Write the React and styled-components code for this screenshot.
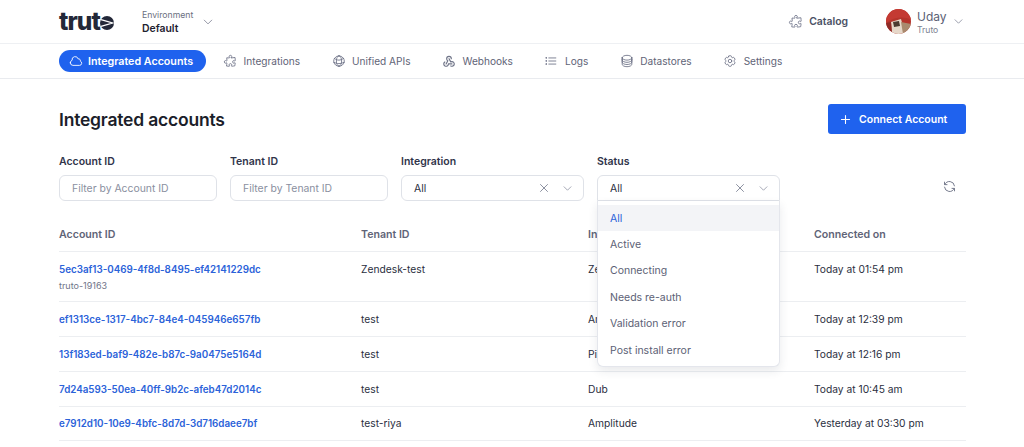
import React from 'react';
import styled, { createGlobalStyle } from 'styled-components';
import {
  HiOutlineCloud,
  HiOutlinePuzzlePiece,
  HiOutlineGlobeAlt,
  HiOutlineListBullet,
  HiOutlineCircleStack,
  HiOutlineCog6Tooth,
  HiOutlineChevronDown,
  HiOutlineXMark,
  HiOutlinePlus,
} from 'react-icons/hi2';
import { TbWebhook, TbRefresh } from 'react-icons/tb';

const GlobalStyle = createGlobalStyle`
  html, body {
    margin: 0;
    padding: 0;
    background: #fff;
    overflow: hidden;
  }
  body {
    font-family: Inter, "Liberation Sans", sans-serif;
    color: #1f2230;
  }
`;

const Page = styled.div`
  width: 1024px;
  height: 447px;
  overflow: hidden;
`;

const TopBar = styled.header`
  height: 43px;
  border-bottom: 1px solid #eef0f3;
  padding: 0 60px 0 59px;
  display: flex;
  align-items: center;
`;

const Logo = styled.div`
  display: flex;
  align-items: center;
  width: 83px;
  font-size: 24.5px;
  font-weight: 800;
  letter-spacing: -0.9px;
  color: #232838;
  line-height: 1;
  svg { margin-left: 0.5px; margin-top: 3px; }
`;

const EnvBlock = styled.div`
  display: flex;
  flex-direction: column;
  gap: 1px;
  width: 60px;
  margin-top: 1px;
`;

const EnvLabel = styled.span`
  font-size: 8.7px;
  color: #6b7080;
  line-height: 11px;
`;

const EnvValue = styled.span`
  font-size: 10.4px;
  font-weight: 600;
  color: #1f2230;
  line-height: 13px;
`;

const Caret = styled(HiOutlineChevronDown)`
  color: #71768a;
  width: ${p => p.$size || 12}px;
  height: ${p => p.$size || 12}px;
  flex: none;
`;

const Spacer = styled.div`
  flex: 1;
`;

const CatalogLink = styled.div`
  display: flex;
  align-items: center;
  gap: 6px;
  font-size: 10.4px;
  font-weight: 600;
  color: #4a5064;
  margin-right: 38px;
  svg { width: 15px; height: 15px; color: #70758a; stroke-width: 1.4; }
`;

const UserBlock = styled.div`
  display: flex;
  align-items: center;
  gap: 6px;
`;

const UserText = styled.div`
  display: flex;
  flex-direction: column;
  width: 30px;
  margin-top: 2px;
`;

const UserName = styled.span`
  font-size: 12px;
  color: #5c6175;
  line-height: 15px;
`;

const UserOrg = styled.span`
  font-size: 8.6px;
  color: #7a7f90;
  line-height: 13px;
`;

const NavBar = styled.nav`
  height: 34px;
  border-bottom: 1px solid #e9ebef;
  padding: 0 59px;
  display: flex;
  align-items: center;
  gap: 31.5px;
`;

const NavItem = styled.a`
  height: 22px;
  box-sizing: border-box;
  display: flex;
  align-items: center;
  gap: 6.5px;
  color: #5f6477;
  font-size: 10.1px;
  white-space: nowrap;
  svg { width: 14px; height: 14px; flex: none; color: #6f7488; }
`;

const ActiveNavItem = styled(NavItem)`
  gap: 5px;
  padding: 0 13px 0 10px;
  margin-right: -14.5px;
  border-radius: 11px;
  font-size: 10.7px;
  font-weight: 600;
  color: #fff;
  background: #1f62ee;
  svg { color: #fff; }
`;

const Content = styled.main`
  padding: 25px 58px 0 59px;
  position: relative;
`;

const TitleRow = styled.div`
  display: flex;
  justify-content: space-between;
  align-items: center;
  height: 30px;
`;

const Title = styled.h1`
  margin: 0;
  font-size: 17.5px;
  font-weight: 600;
  letter-spacing: -0.2px;
  color: #1b1e2a;
`;

const ConnectButton = styled.button`
  width: 138px;
  height: 30px;
  padding: 0 0 0 11px;
  border: 0;
  border-radius: 3px;
  background: #1f62ee;
  color: #fff;
  font-family: inherit;
  font-size: 10.5px;
  font-weight: 600;
  display: flex;
  align-items: center;
  gap: 7px;
  svg { width: 13px; height: 13px; stroke-width: 2; }
`;

const Filters = styled.div`
  display: flex;
  gap: 13px;
  margin-top: 21px;
  position: relative;
`;

const Field = styled.div`
  width: ${p => p.$w}px;
  position: relative;
`;

const FieldLabel = styled.div`
  font-size: 10.5px;
  font-weight: 600;
  color: #30344a;
  line-height: 14px;
  margin-bottom: 6px;
`;

const TextInput = styled.div`
  height: 26px;
  box-sizing: border-box;
  border: 1px solid #dfe2e8;
  border-radius: 6px;
  padding: 0 12px;
  display: flex;
  align-items: center;
  font-size: 10.4px;
  color: #8a8fa0;
`;

const Select = styled(TextInput)`
  color: #2a2e3e;
  justify-content: space-between;
  border-radius: ${p => (p.$open ? '6px 6px 0 0' : '6px')};
`;

const SelectIcons = styled.div`
  display: flex;
  align-items: center;
  gap: 11px;
  margin-right: -2px;
  svg { color: #7d8294; }
`;

const ClearIcon = styled(HiOutlineXMark)`
  width: 14px;
  height: 14px;
`;

const Menu = styled.ul`
  position: absolute;
  left: 0;
  right: 0;
  top: 46px;
  margin: 0;
  padding: 4px 0 3px;
  list-style: none;
  background: #fff;
  border: 1px solid #e4e6ec;
  border-top: 0;
  border-radius: 0 0 6px 6px;
  box-shadow: 0 4px 10px rgba(40, 45, 70, 0.1);
  z-index: 5;
`;

const MenuItem = styled.li`
  height: 26.4px;
  display: flex;
  align-items: center;
  padding: 0 12px;
  font-size: 10.5px;
  color: ${p => (p.$selected ? '#2b62d9' : '#5c6175')};
  background: ${p => (p.$selected ? '#f3f4f7' : 'transparent')};
`;

const RefreshButton = styled.div`
  margin-left: auto;
  padding: 23px 9px 0 0;
  svg { width: 15px; height: 15px; color: #6f7488; stroke-width: 1.5; }
`;

const Table = styled.div`
  margin-top: 24px;
`;

const Row = styled.div`
  display: grid;
  grid-template-columns: 302px 227px 226px 1fr;
  align-items: start;
  box-sizing: border-box;
  height: ${p => p.$h || 35}px;
  padding-top: ${p => p.$pt || 11}px;
  border-bottom: 1px solid #eceef1;
  font-size: 10.25px;
  line-height: 13px;
  color: #2a2e3e;
`;

const HeadCell = styled.div`
  font-size: 10.6px;
  font-weight: 600;
  color: #5f6477;
`;

const AccountLink = styled.a`
  display: block;
  font-size: 9.8px;
  font-weight: 600;
  color: #2b62d9;
`;

const SubText = styled.div`
  font-size: 9px;
  color: #6f7488;
  margin-top: 3px;
`;

const rows = [
  { id: '5ec3af13-0469-4f8d-8495-ef42141229dc', sub: 'truto-19163', tenant: 'Zendesk-test', integration: 'Zendesk', date: 'Today at 01:54 pm', h: 50 },
  { id: 'ef1313ce-1317-4bc7-84e4-045946e657fb', tenant: 'test', integration: 'Amplitude', date: 'Today at 12:39 pm' },
  { id: '13f183ed-baf9-482e-b87c-9a0475e5164d', tenant: 'test', integration: 'Pipedrive', date: 'Today at 12:16 pm' },
  { id: '7d24a593-50ea-40ff-9b2c-afeb47d2014c', tenant: 'test', integration: 'Dub', date: 'Today at 10:45 am' },
  { id: 'e7912d10-10e9-4bfc-8d7d-3d716daee7bf', tenant: 'test-riya', integration: 'Amplitude', date: 'Yesterday at 03:30 pm', h: 34, pt: 10 },
];

const statuses = ['All', 'Active', 'Connecting', 'Needs re-auth', 'Validation error', 'Post install error'];

const navItems = [
  { label: 'Integrations', Icon: HiOutlinePuzzlePiece },
  { label: 'Unified APIs', Icon: HiOutlineGlobeAlt },
  { label: 'Webhooks', Icon: TbWebhook },
  { label: 'Logs', Icon: HiOutlineListBullet },
  { label: 'Datastores', Icon: HiOutlineCircleStack },
  { label: 'Settings', Icon: HiOutlineCog6Tooth },
];

const LogoMark = () => (
  <svg width="14" height="14" viewBox="0 0 14 14">
    <circle cx="7" cy="7" r="7" fill="#232838" />
    <path d="M1 3.6 L12.5 7 L1 10.4" fill="none" stroke="#fff" strokeWidth="1.3" />
  </svg>
);

const Avatar = () => (
  <svg width="25" height="25" viewBox="0 0 25 25">
    <defs>
      <clipPath id="avatar-clip">
        <circle cx="12.5" cy="12.5" r="12.5" />
      </clipPath>
    </defs>
    <g clipPath="url(#avatar-clip)">
      <rect width="25" height="25" fill="#b5342c" />
      <path d="M0 0 H25 V11 C18 7 8 8 0 14 Z" fill="#c43a33" />
      <path d="M5 13 L15 10 L19 25 L6 25 Z" fill="#e6d8ca" />
      <path d="M7 13 L13 12 L14 17 L8 18 Z" fill="#4b3a30" />
      <path d="M15 13 L25 15 L25 25 L17 25 Z" fill="#a98a6e" />
      <path d="M0 14 L5 13 L6 25 L0 25 Z" fill="#8f2b27" />
    </g>
  </svg>
);

export default function App() {
  return (
    <Page>
      <GlobalStyle />
      <TopBar>
        <Logo>
          trut
          <LogoMark />
        </Logo>
        <EnvBlock>
          <EnvLabel>Environment</EnvLabel>
          <EnvValue>Default</EnvValue>
        </EnvBlock>
        <Caret />
        <Spacer />
        <CatalogLink>
          <HiOutlinePuzzlePiece />
          Catalog
        </CatalogLink>
        <UserBlock>
          <Avatar />
          <UserText>
            <UserName>Uday</UserName>
            <UserOrg>Truto</UserOrg>
          </UserText>
          <Caret $size={11} />
        </UserBlock>
      </TopBar>
      <NavBar>
        <ActiveNavItem>
          <HiOutlineCloud />
          Integrated Accounts
        </ActiveNavItem>
        {navItems.map(({ label, Icon }) => (
          <NavItem key={label}>
            <Icon />
            {label}
          </NavItem>
        ))}
      </NavBar>
      <Content>
        <TitleRow>
          <Title>Integrated accounts</Title>
          <ConnectButton>
            <HiOutlinePlus />
            Connect Account
          </ConnectButton>
        </TitleRow>
        <Filters>
          <Field $w={158}>
            <FieldLabel>Account ID</FieldLabel>
            <TextInput>Filter by Account ID</TextInput>
          </Field>
          <Field $w={158}>
            <FieldLabel>Tenant ID</FieldLabel>
            <TextInput>Filter by Tenant ID</TextInput>
          </Field>
          <Field $w={183}>
            <FieldLabel>Integration</FieldLabel>
            <Select>
              All
              <SelectIcons>
                <ClearIcon />
                <Caret $size={11} />
              </SelectIcons>
            </Select>
          </Field>
          <Field $w={183}>
            <FieldLabel>Status</FieldLabel>
            <Select $open>
              All
              <SelectIcons>
                <ClearIcon />
                <Caret $size={11} />
              </SelectIcons>
            </Select>
            <Menu>
              {statuses.map((s, i) => (
                <MenuItem key={s} $selected={i === 0}>{s}</MenuItem>
              ))}
            </Menu>
          </Field>
          <RefreshButton>
            <TbRefresh />
          </RefreshButton>
        </Filters>
        <Table>
          <Row $h={27} $pt={3}>
            <HeadCell>Account ID</HeadCell>
            <HeadCell>Tenant ID</HeadCell>
            <HeadCell>Integration</HeadCell>
            <HeadCell>Connected on</HeadCell>
          </Row>
          {rows.map(r => (
            <Row key={r.id} $h={r.h} $pt={r.pt}>
              <div>
                <AccountLink>{r.id}</AccountLink>
                {r.sub && <SubText>{r.sub}</SubText>}
              </div>
              <div>{r.tenant}</div>
              <div>{r.integration}</div>
              <div>{r.date}</div>
            </Row>
          ))}
        </Table>
      </Content>
    </Page>
  );
}
